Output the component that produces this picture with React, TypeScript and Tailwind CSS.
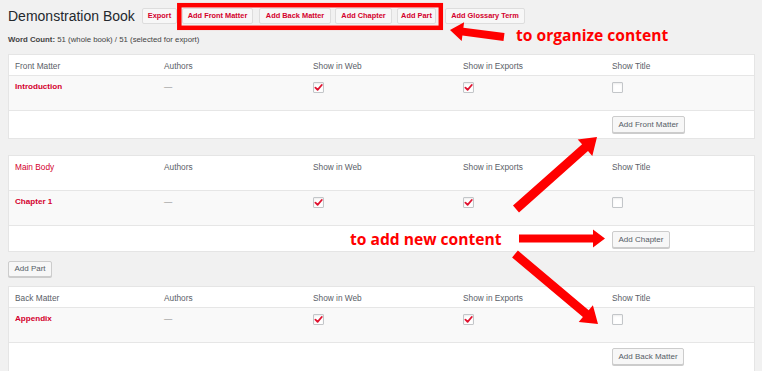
import React from "react";

type Section = {
  label: string;
  labelRed?: boolean;
  item: string;
  headerH: string;
  footerH: string;
  button: string;
  btnW: string;
  mt: string;
};

const topButtons = [
  { text: "Export", cls: "w-[35px] ml-[7px]" },
  { text: "Add Front Matter", cls: "w-[71px] ml-[5px]" },
  { text: "Add Back Matter", cls: "w-[72px] ml-[6px]" },
  { text: "Add Chapter", cls: "w-[57px] ml-[4px]" },
  { text: "Add Part", cls: "w-[39px] ml-[5px]" },
  { text: "Add Glossary Term", cls: "w-[80px] ml-[9px]" },
];

const cols = "grid grid-cols-[149px_149px_150px_149px_1fr]";

function Checkbox({ checked }: { checked?: boolean }) {
  return (
    <div className="w-[11px] h-[11px] border border-[#c3c6c9] bg-white rounded-[1px] shadow-[inset_0_1px_2px_rgba(0,0,0,0.08)] flex items-center justify-center">
      {checked && (
        <svg width="9" height="9" viewBox="0 0 10 10">
          <path d="M1.6 5.2 L4 7.6 L8.6 2.2" fill="none" stroke="#e0122f" strokeWidth="2" strokeLinecap="round" strokeLinejoin="round" />
        </svg>
      )}
    </div>
  );
}

function Table({ s }: { s: Section }) {
  return (
    <div className={`${s.mt} ml-[8px] mr-[7px] bg-white border border-[#e5e5e5] text-[8.3px] leading-[10px]`}>
      <div className={`${cols} ${s.headerH} pt-[6px] text-[#5a6067]`}>
        <div className={`pl-[6px] ${s.labelRed ? "text-[#d4002d]" : ""}`}>{s.label}</div>
        <div className="pl-[6px]">Authors</div>
        <div className="pl-[6px]">Show in Web</div>
        <div className="pl-[6px]">Show in Exports</div>
        <div className="pl-[6px]">Show Title</div>
      </div>
      <div className={`${cols} h-[36px] pt-[6px] bg-[#f9f9f9] border-y border-[#e6e6e6]`}>
        <div className="pl-[6px] font-bold text-[#d4002d] text-[8.1px]">{s.item}</div>
        <div className="pl-[6px] text-[#888]">—</div>
        <div className="pl-[6px]"><Checkbox checked /></div>
        <div className="pl-[6px]"><Checkbox checked /></div>
        <div className="pl-[6px]"><Checkbox /></div>
      </div>
      <div className={`${s.footerH} flex pt-[5px] pl-[603px]`}>
        <button className={`${s.btnW} h-[17px] bg-[#f7f7f7] border border-[#cccccc] rounded-[2px] shadow-[0_1px_0_#cccccc] text-[8px] text-[#555d66]`}>
          {s.button}
        </button>
      </div>
    </div>
  );
}

function arrow(x1: number, y1: number, x2: number, y2: number, shaft: number, headLen: number, headW: number) {
  const dx = x2 - x1;
  const dy = y2 - y1;
  const L = Math.hypot(dx, dy);
  const ux = dx / L;
  const uy = dy / L;
  const nx = -uy;
  const ny = ux;
  const bx = x2 - ux * headLen;
  const by = y2 - uy * headLen;
  const p = (x: number, y: number) => `${x.toFixed(1)},${y.toFixed(1)}`;
  return [
    p(x1 + (nx * shaft) / 2, y1 + (ny * shaft) / 2),
    p(bx + (nx * shaft) / 2, by + (ny * shaft) / 2),
    p(bx + (nx * headW) / 2, by + (ny * headW) / 2),
    p(x2, y2),
    p(bx - (nx * headW) / 2, by - (ny * headW) / 2),
    p(bx - (nx * shaft) / 2, by - (ny * shaft) / 2),
    p(x1 - (nx * shaft) / 2, y1 - (ny * shaft) / 2),
  ].join(" ");
}

export default function App() {
  const sections: Section[] = [
    { label: "Front Matter", item: "Introduction", headerH: "h-[20px]", footerH: "h-[27px]", button: "Add Front Matter", btnW: "w-[73px]", mt: "mt-[9px]" },
    { label: "Main Body", labelRed: true, item: "Chapter 1", headerH: "h-[34px]", footerH: "h-[25px]", button: "Add Chapter", btnW: "w-[58px]", mt: "mt-[16px]" },
  ];
  const back: Section = { label: "Back Matter", item: "Appendix", headerH: "h-[20px]", footerH: "h-[30px]", button: "Add Back Matter", btnW: "w-[72px]", mt: "mt-[9px]" };

  return (
    <div className="relative w-[762px] h-[371px] overflow-hidden bg-[#f1f1f1] font-['Liberation_Sans',Arial,sans-serif] text-[#23282d]">
      <div className="pt-[8px]">
        <div className="flex items-center h-[16px] pl-[8px]">
          <h1 className="text-[14px] leading-none font-normal text-[#23282d] w-[127px] whitespace-nowrap">Demonstration Book</h1>
          {topButtons.map((b) => (
            <button
              key={b.text}
              className={`${b.cls} h-[16px] bg-[#f7f7f7] border border-[#dddddd] rounded-[2px] text-[7.4px] font-bold text-[#d4002d] whitespace-nowrap`}
            >
              {b.text}
            </button>
          ))}
        </div>
        <div className="mt-[11px] h-[10px] pl-[8px] text-[7.8px] leading-[10px] text-[#444]">
          <span className="font-bold">Word Count:</span> 51 (whole book) / 51 (selected for export)
        </div>

        {sections.map((s) => (
          <Table key={s.label} s={s} />
        ))}

        <div className="mt-[9px] pl-[8px] flex">
          <button className="w-[44px] h-[16px] bg-[#f7f7f7] border border-[#cccccc] rounded-[2px] shadow-[0_1px_0_#cccccc] text-[8px] text-[#555d66]">
            Add Part
          </button>
        </div>

        <Table s={back} />
      </div>

      {/* annotations */}
      <svg className="absolute inset-0 pointer-events-none" width="762" height="371" viewBox="0 0 762 371">
        <rect x="179.3" y="5.2" width="261.5" height="22.6" fill="none" stroke="#ff0000" strokeWidth="4.5" />
        <polygon fill="#ff0000" points={arrow(504, 37, 450, 30, 8, 13, 19)} />
        <polygon fill="#ff0000" points={arrow(516, 209, 597, 137, 9, 16, 22)} />
        <polygon fill="#ff0000" points={arrow(519, 238.5, 605, 238.5, 8, 12, 18)} />
        <polygon fill="#ff0000" points={arrow(515, 254, 598, 324, 9, 16, 22)} />
      </svg>
      <div className="absolute left-[516px] top-[25px] text-[15.6px] leading-[20px] font-bold text-[#ff0000] font-['Open_Sans',sans-serif] whitespace-nowrap">
        to organize content
      </div>
      <div className="absolute left-[350px] top-[229px] text-[15.6px] leading-[20px] font-bold text-[#ff0000] font-['Open_Sans',sans-serif] whitespace-nowrap">
        to add new content
      </div>
    </div>
  );
}
